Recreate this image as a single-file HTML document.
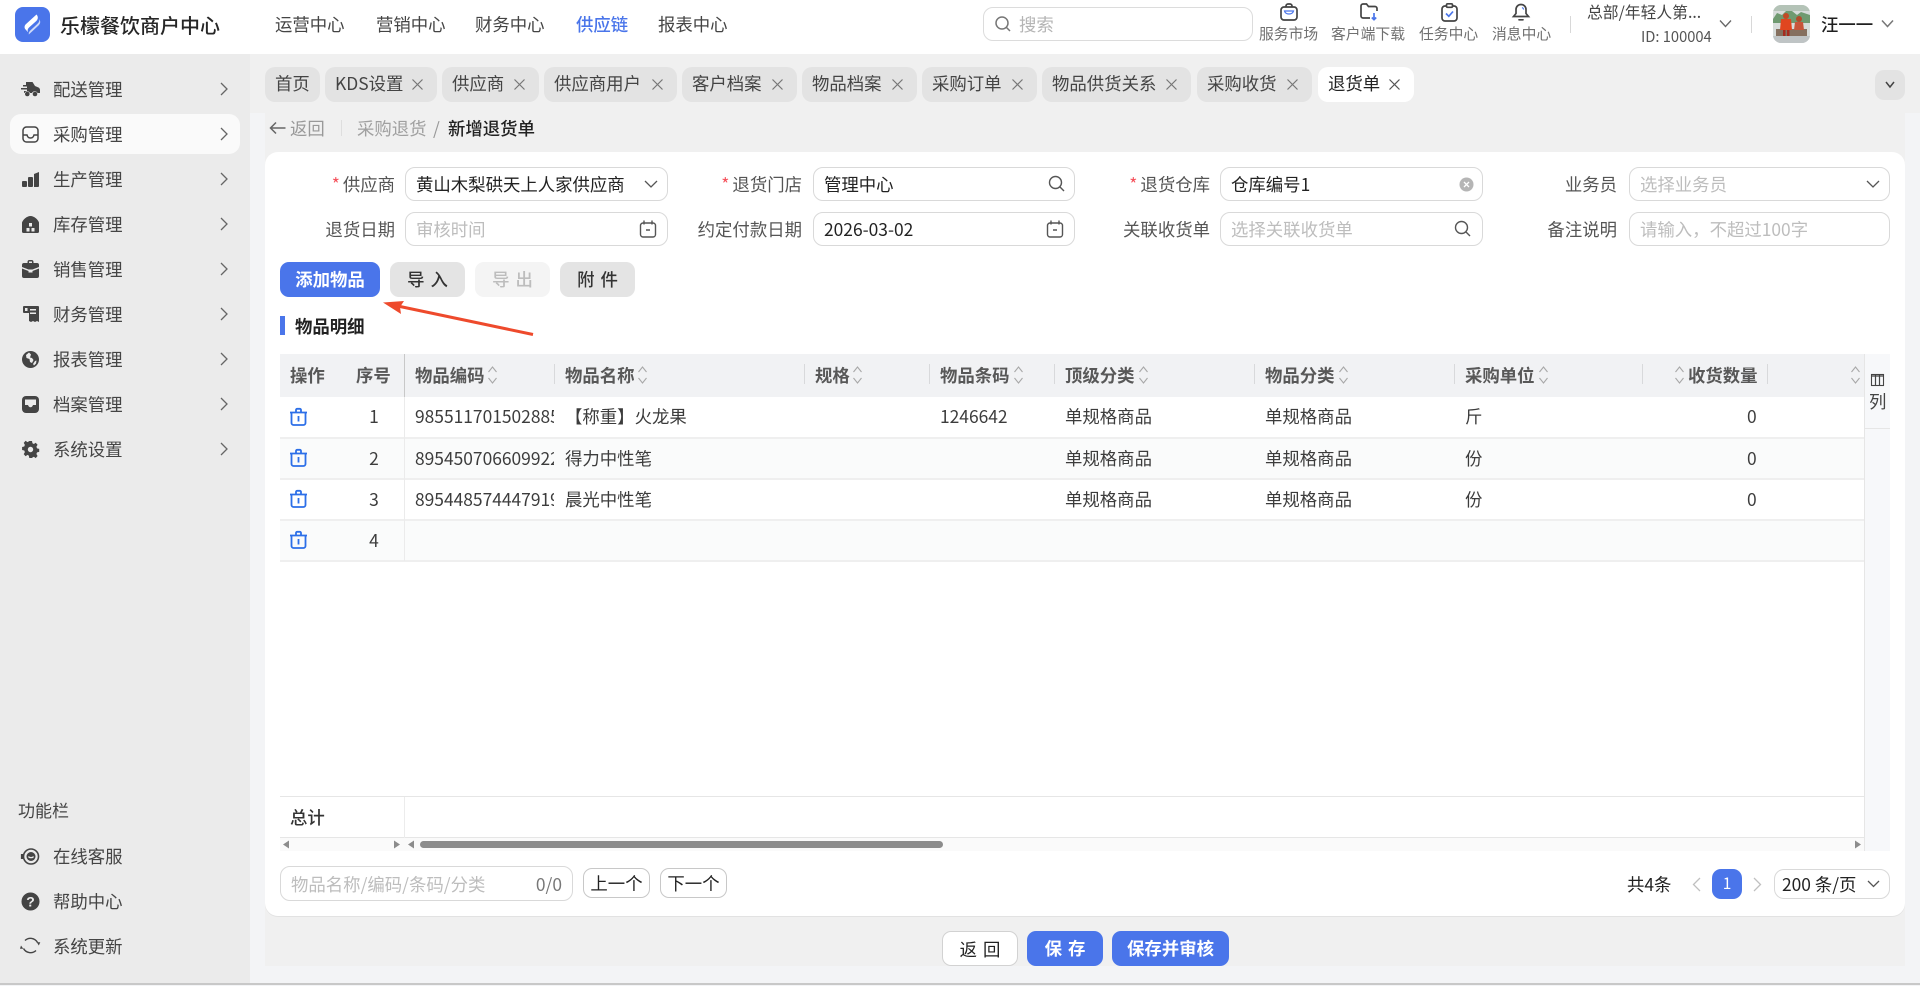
<!DOCTYPE html>
<html lang="zh-CN"><head><meta charset="utf-8"><title>新增退货单</title>
<style>
*{box-sizing:border-box}
html,body{margin:0;padding:0;width:1920px;height:986px;overflow:hidden;background:#f3f4f6;font-family:"Noto Sans CJK SC","Liberation Sans",sans-serif;font-size:17.4px;color:#333}
.a{position:absolute}
.t{position:absolute;white-space:nowrap;line-height:24px;height:24px}
svg{position:absolute;overflow:visible}
.nav{color:#444;top:13px;font-size:17.4px}
.side{color:#444;left:53px}
.chev{left:220px;width:8px;height:14px}
.tab{position:absolute;top:67px;height:35px;background:#e3e3e3;border-radius:10px;line-height:34px;padding-left:10px;color:#444;white-space:nowrap}
.tab svg{top:12px;right:14px;width:11px;height:11px}
.inp{position:absolute;height:34px;background:#fff;border:1px solid #d9d9d9;border-radius:10px;line-height:33px;padding-left:10px;color:#222;white-space:nowrap}
.ph{color:#bdbdbd}
.lab{position:absolute;white-space:nowrap;line-height:24px;color:#555;text-align:right}
.lab i{color:#f5525c;font-style:normal;margin-right:3px}
.btn{position:absolute;top:262px;height:35px;border-radius:9px;line-height:36px;text-align:center;font-weight:500;background:#e4e4e4;color:#333}
.th{position:absolute;top:364px;font-weight:700;color:#585858;white-space:nowrap;line-height:24px;font-size:17.4px}
.sep{position:absolute;top:364px;width:1px;height:20px;background:#d8d9db}
.td{position:absolute;white-space:nowrap;line-height:24px;color:#3c3c3c}
.hl{position:absolute;left:280px;width:1585px;height:2px;background:#efefef}
.hi{position:absolute;top:24px;font-size:14.8px;color:#707070;line-height:20px;white-space:nowrap}
</style></head><body>

<!-- header -->
<div class="a" style="left:0;top:0;width:1920px;height:54px;background:#fff"></div>
<div class="a" style="left:15px;top:7px;width:35px;height:35px;background:#4a75ea;border-radius:8px"></div>
<svg style="left:15px;top:7px" width="35" height="35" viewBox="0 0 35 35"><path d="M21.500 7.500L10.800 17.200c-1.600 1.600-1.600 3.800-.2 5.300l2.700 3c-1.200-2-.6-3.700 1-5.200l7-6.300c2-2 2-4.500.2-6.500z" fill="#fff"/><path d="M24.200 12.300c1.500 1.800 1.300 4.200-.3 5.800L13.800 27.500c-.2-1.500.2-2.700 1.500-4l6.700-6.200c1.800-1.700 2.700-3 2.200-5z" fill="#cfdaf8"/></svg>
<div class="t" style="left:60px;top:13px;font-size:20px;font-weight:500;color:#262626">乐檬餐饮商户中心</div>
<div class="t nav" style="left:275px">运营中心</div>
<div class="t nav" style="left:376px">营销中心</div>
<div class="t nav" style="left:475px">财务中心</div>
<div class="t nav" style="left:576px;color:#4a75ea;font-weight:500">供应链</div>
<div class="t nav" style="left:658px">报表中心</div>

<div class="a" style="left:983px;top:7px;width:270px;height:34px;border:1px solid #dcdcdc;border-radius:10px;background:#fff"></div>
<svg style="left:994px;top:15px" width="18" height="18" viewBox="0 0 18 18" fill="none" stroke="#777" stroke-width="1.500"><circle cx="8" cy="8" r="6"/><path d="M12.500 12.500L16 16"/></svg>
<div class="t" style="left:1019px;top:13px;color:#b5b5b5">搜索</div>

<svg style="left:1280px;top:3px" width="18" height="18" viewBox="0 0 18 18" fill="none" stroke="#444" stroke-width="1.700"><rect x="1" y="4" width="16" height="13" rx="3"/><path d="M6 4V3a2 2 0 0 1 2-2h2a2 2 0 0 1 2 2v1"/><path d="M4.500 8h9c-.5 2-2.300 3-4.500 3S5 10 4.500 8z" stroke="#4a75ea" stroke-width="1.200" fill="none"/></svg>
<div class="hi" style="left:1259px">服务市场</div>
<svg style="left:1360px;top:3px" width="19" height="18" viewBox="0 0 19 18" fill="none" stroke="#444" stroke-width="1.700"><path d="M10 15H3a2 2 0 0 1-2-2V3a2 2 0 0 1 2-2h3.500l2 2.500H15A2 2 0 0 1 17 5.500V8"/><path d="M14 10v6.500M11.800 14.500l2.200 2.200 2.200-2.200" stroke="#4a75ea"/></svg>
<div class="hi" style="left:1331px">客户端下载</div>
<svg style="left:1441px;top:3px" width="17" height="19" viewBox="0 0 17 19" fill="none" stroke="#444" stroke-width="1.700"><rect x="1" y="3" width="15" height="15" rx="3"/><rect x="5.500" y=".8" width="6" height="3.500" rx="1.200" fill="#fff"/><path d="M5 10.500l2.800 2.800 4.200-4.800" stroke="#4a75ea"/></svg>
<div class="hi" style="left:1419px">任务中心</div>
<svg style="left:1512px;top:3px" width="18" height="19" viewBox="0 0 18 19" fill="none" stroke="#444" stroke-width="1.700"><path d="M9 1.500c-3 0-5 2.300-5 5v4L1.500 13.500h15L14 10.500v-4c0-2.700-2-5-5-5z"/><path d="M7 16.800h4" stroke-linecap="round"/><path d="M10 4.500c1 .4 1.500 1.200 1.700 2" stroke="#4a75ea" stroke-width="1.200"/></svg>
<div class="hi" style="left:1492px">消息中心</div>
<div class="a" style="left:1570px;top:16px;width:1px;height:17px;background:#d8d8d8"></div>
<div class="t" style="left:1587px;top:0;font-size:15.8px;color:#444">总部/年轻人第...</div>
<div class="t" style="left:1641px;top:25px;font-size:14.7px;color:#555">ID: 100004</div>
<svg style="left:1719px;top:19px" width="13" height="9" viewBox="0 0 13 9" fill="none" stroke="#666" stroke-width="1.300"><path d="M1 1.500l5.500 6 5.500-6"/></svg>
<div class="a" style="left:1751px;top:16px;width:1px;height:17px;background:#d8d8d8"></div>
<svg style="left:1773px;top:5px" width="37" height="38" viewBox="0 0 37 38"><defs><clipPath id="av"><rect width="37" height="38" rx="8"/></clipPath></defs><g clip-path="url(#av)"><rect width="37" height="38" fill="#d7dcda"/><path d="M0 14l4-6 5 2 4-4h6l5 4 4-3 9 3v8H0z" fill="#6f9a70"/><rect x="0" y="0" width="37" height="6" fill="#b4c3b7"/><rect y="31" width="37" height="7" fill="#bfc4c5"/><rect x="3" y="24" width="31" height="7" fill="#85705f"/><circle cx="13" cy="11" r="3" fill="#c24a26"/><path d="M8 14h10l1 11H7z" fill="#e0461f"/><rect x="10" y="25" width="2.500" height="6" fill="#a52a1e"/><rect x="14" y="25" width="2.500" height="6" fill="#a52a1e"/><circle cx="26" cy="14" r="3" fill="#b24b2c"/><path d="M22 17h8l1 8h-10z" fill="#c8553a"/></g></svg>
<div class="t" style="left:1821px;top:13px;font-weight:500;color:#1f1f1f;font-size:17.4px">汪一一</div>
<svg style="left:1881px;top:19px" width="13" height="9" viewBox="0 0 13 9" fill="none" stroke="#777" stroke-width="1.500"><path d="M1 1.500l5.500 6 5.500-6"/></svg>

<!-- sidebar -->
<div class="a" style="left:0;top:54px;width:250px;height:929px;background:#ebebeb"></div>
<div class="a" style="left:10px;top:114px;width:230px;height:40px;background:#fafafa;border-radius:11px"></div>

<svg style="left:21px;top:82px" width="19" height="15" viewBox="0 0 19 15" fill="#444"><path d="M5 0h6.500l2.500 4 3.500 1.500c.8.500 1.500 1.200 1.500 2.500v3h-2.500a3 3 0 0 0-5.500 0H9a3 3 0 0 0-5.500 0H3V9h3V7.500H0V6h6V4.500H2V3h3z"/><circle cx="6.300" cy="12" r="2.300"/><circle cx="14" cy="12" r="2.300"/></svg>
<div class="t side" style="top:78px">配送管理</div>
<svg class="chev" style="top:82px" viewBox="0 0 8 14" fill="none" stroke="#666" stroke-width="1.300"><path d="M1 1l6 6-6 6"/></svg>

<svg style="left:22px;top:126px" width="17" height="17" viewBox="0 0 17 17" fill="none" stroke="#444" stroke-width="1.500"><rect x="1" y="1" width="15" height="15" rx="3.500"/><path d="M1 9h4c.5 2 1.800 3 3.500 3s3-1 3.500-3h4"/></svg>
<div class="t side" style="top:123px">采购管理</div>
<svg class="chev" style="top:127px" viewBox="0 0 8 14" fill="none" stroke="#666" stroke-width="1.300"><path d="M1 1l6 6-6 6"/></svg>

<svg style="left:22px;top:172px" width="17" height="15" viewBox="0 0 17 15" fill="#444"><rect x="0" y="9" width="5" height="6" rx="1"/><rect x="6" y="5" width="5" height="10" rx="1"/><path d="M12 2l5-2v14a1 1 0 0 1-1 1h-4z"/></svg>
<div class="t side" style="top:168px">生产管理</div>
<svg class="chev" style="top:172px" viewBox="0 0 8 14" fill="none" stroke="#666" stroke-width="1.300"><path d="M1 1l6 6-6 6"/></svg>

<svg style="left:22px;top:216px" width="17" height="17" viewBox="0 0 17 17" fill="#444"><path d="M8.500 0C5 0 1 3.500 0 6.500V15.500A1.500 1.500 0 0 0 1.500 17h14a1.500 1.500 0 0 0 1.500-1.500V6.500C16 3.500 12 0 8.500 0z"/><rect x="7" y="7" width="3" height="3.500" fill="#ebebeb"/><rect x="4.500" y="12" width="3" height="3.500" fill="#ebebeb"/><rect x="9.500" y="12" width="3" height="3.500" fill="#ebebeb"/></svg>
<div class="t side" style="top:213px">库存管理</div>
<svg class="chev" style="top:217px" viewBox="0 0 8 14" fill="none" stroke="#666" stroke-width="1.300"><path d="M1 1l6 6-6 6"/></svg>

<svg style="left:22px;top:260px" width="17" height="18" viewBox="0 0 17 18" fill="#444"><path d="M5.500 3V2a2 2 0 0 1 2-2h2a2 2 0 0 1 2 2v1H15a2 2 0 0 1 2 2v11a2 2 0 0 1-2 2H2a2 2 0 0 1-2-2V5a2 2 0 0 1 2-2z"/><path d="M7 1.500h3V3H7z" fill="#ebebeb"/><path d="M0 7l6.500 2.500h4L17 7v1.500l-6.500 2.500v1.500h-4V11L0 8.500z" fill="#ebebeb"/></svg>
<div class="t side" style="top:258px">销售管理</div>
<svg class="chev" style="top:262px" viewBox="0 0 8 14" fill="none" stroke="#666" stroke-width="1.300"><path d="M1 1l6 6-6 6"/></svg>

<svg style="left:23px;top:306px" width="16" height="16" viewBox="0 0 16 16" fill="#444"><path d="M0 1a1 1 0 0 1 1-1h14a1 1 0 0 1 1 1v15l-2-1-2 1-2-1-2 1-2-1V7H1a1 1 0 0 1-1-1z"/><rect x="7" y="3" width="6" height="1.500" fill="#ebebeb"/><rect x="7" y="6.500" width="6" height="1.500" fill="#ebebeb"/><rect x="2" y="2" width="2.500" height="3" fill="#ebebeb"/></svg>
<div class="t side" style="top:303px">财务管理</div>
<svg class="chev" style="top:307px" viewBox="0 0 8 14" fill="none" stroke="#666" stroke-width="1.300"><path d="M1 1l6 6-6 6"/></svg>

<svg style="left:22px;top:351px" width="17" height="17" viewBox="0 0 17 17"><circle cx="8.500" cy="8.500" r="8.500" fill="#444"/><path d="M7 1.500L4 4l.5 3 3 1 .5 3 2 1 1.500-3-1.500-2-2-.5L9 3.500zM13 10l1.500-.5-.5 3-2 2-1-1.500z" fill="#ebebeb"/></svg>
<div class="t side" style="top:348px">报表管理</div>
<svg class="chev" style="top:352px" viewBox="0 0 8 14" fill="none" stroke="#666" stroke-width="1.300"><path d="M1 1l6 6-6 6"/></svg>

<svg style="left:22px;top:396px" width="17" height="17" viewBox="0 0 17 17"><rect width="17" height="17" rx="4" fill="#444"/><path d="M3 3.500h11V9h-3c-.5 1.500-1.500 2.300-2.500 2.300S6.500 10.500 6 9H3z" fill="#ebebeb"/></svg>
<div class="t side" style="top:393px">档案管理</div>
<svg class="chev" style="top:397px" viewBox="0 0 8 14" fill="none" stroke="#666" stroke-width="1.300"><path d="M1 1l6 6-6 6"/></svg>

<svg style="left:22px;top:441px" width="17" height="17" viewBox="0 0 17 17"><path d="M7 0h3l.5 2.300 1.600.7 2-1.300 2.100 2.100-1.300 2 .7 1.600 2.400.5v3l-2.400.5-.7 1.600 1.300 2-2.100 2.100-2-1.300-1.600.7L10 17H7l-.5-2.400-1.600-.7-2 1.300L.8 13.100l1.300-2-.7-1.600L-1 9V6l2.400-.5.7-1.600-1.300-2L2.900-.2l2 1.300 1.600-.7z" transform="translate(1 0) scale(.9 1)" fill="#444"/><circle cx="8.500" cy="8.500" r="2.700" fill="#ebebeb"/></svg>
<div class="t side" style="top:438px">系统设置</div>
<svg class="chev" style="top:442px" viewBox="0 0 8 14" fill="none" stroke="#666" stroke-width="1.300"><path d="M1 1l6 6-6 6"/></svg>

<div class="t" style="left:18px;top:798px;color:#444;font-size:17px">功能栏</div>
<svg style="left:20px;top:847px" width="21" height="19" viewBox="0 0 21 19" fill="none" stroke="#444"><circle cx="11" cy="9.500" r="7.500" stroke-width="1.600"/><circle cx="11" cy="9.500" r="4.500" fill="#444" stroke="none"/><path d="M8.500 9.500c.5 1.500 4.500 1.500 5 0" stroke="#ebebeb" stroke-width="1.200"/><path d="M2 7v5" stroke-width="2.200"/></svg>
<div class="t side" style="top:845px">在线客服</div>
<svg style="left:21px;top:892px" width="19" height="19" viewBox="0 0 19 19"><circle cx="9.500" cy="9.500" r="9" fill="#444"/><text x="9.500" y="14.500" text-anchor="middle" font-size="14" font-weight="700" fill="#ebebeb" font-family="Liberation Sans">?</text></svg>
<div class="t side" style="top:890px">帮助中心</div>
<svg style="left:20px;top:936px" width="21" height="19" viewBox="0 0 21 19" fill="none" stroke="#444" stroke-width="1.400"><path d="M5 4.500A8 8 0 0 1 17.500 6.500"/><path d="M16 14.500A8 8 0 0 1 3.500 12.500"/><path d="M18.800 9.500l-2-3.200h3.500z" fill="#444" stroke="none"/><path d="M1 9.500l2.300 3.200H0z" fill="#444" stroke="none"/></svg>
<div class="t side" style="top:935px">系统更新</div>

<!-- main bg -->
<div class="a" style="left:250px;top:54px;width:1670px;height:59px;background:#f0f0f0"></div>
<div class="a" style="left:265px;top:113px;width:1640px;height:853px;background:#f0f0f0"></div>
<div class="a" style="left:0;top:983px;width:1920px;height:1.500px;background:#c8c8c8"></div>

<!-- tabs -->
<div class="tab" style="left:265px;width:55px">首页</div>
<div class="tab" style="left:325px;width:112px;padding-left:10px">KDS设置<svg viewBox="0 0 11 11" stroke="#777" stroke-width="1.200"><path d="M.5.500l10 10M10.500.500l-10 10"/></svg></div>
<div class="tab" style="left:442px;width:97px">供应商<svg viewBox="0 0 11 11" stroke="#777" stroke-width="1.200"><path d="M.5.500l10 10M10.500.500l-10 10"/></svg></div>
<div class="tab" style="left:544px;width:133px">供应商用户<svg viewBox="0 0 11 11" stroke="#777" stroke-width="1.200"><path d="M.5.500l10 10M10.500.500l-10 10"/></svg></div>
<div class="tab" style="left:682px;width:115px">客户档案<svg viewBox="0 0 11 11" stroke="#777" stroke-width="1.200"><path d="M.5.500l10 10M10.500.500l-10 10"/></svg></div>
<div class="tab" style="left:802px;width:115px">物品档案<svg viewBox="0 0 11 11" stroke="#777" stroke-width="1.200"><path d="M.5.500l10 10M10.500.500l-10 10"/></svg></div>
<div class="tab" style="left:922px;width:115px">采购订单<svg viewBox="0 0 11 11" stroke="#777" stroke-width="1.200"><path d="M.5.500l10 10M10.500.500l-10 10"/></svg></div>
<div class="tab" style="left:1042px;width:149px">物品供货关系<svg viewBox="0 0 11 11" stroke="#777" stroke-width="1.200"><path d="M.5.500l10 10M10.500.500l-10 10"/></svg></div>
<div class="tab" style="left:1197px;width:115px">采购收货<svg viewBox="0 0 11 11" stroke="#777" stroke-width="1.200"><path d="M.5.500l10 10M10.500.500l-10 10"/></svg></div>
<div class="tab" style="left:1318px;width:96px;background:#fff;color:#222">退货单<svg viewBox="0 0 11 11" stroke="#555" stroke-width="1.200"><path d="M.5.500l10 10M10.500.500l-10 10"/></svg></div>
<div class="a" style="left:1875px;top:70px;width:30px;height:30px;background:#e3e3e3;border-radius:9px"></div>
<svg style="left:1885px;top:81px" width="10" height="8" viewBox="0 0 10 8" fill="none" stroke="#444" stroke-width="1.500"><path d="M1 1l4 5 4-5"/></svg>

<!-- breadcrumb -->
<svg style="left:269px;top:121px" width="17" height="14" viewBox="0 0 17 14" fill="none" stroke="#666" stroke-width="1.500"><path d="M16.500 7H1.500M7 1.500L1.500 7 7 12.500"/></svg>
<div class="t" style="left:290px;top:117px;color:#999">返回</div>
<div class="a" style="left:341px;top:120px;width:1px;height:16px;background:#dedede"></div>
<div class="t" style="left:357px;top:117px;color:#a0a0a0">采购退货</div>
<div class="t" style="left:433px;top:117px;color:#999">/</div>
<div class="t" style="left:448px;top:117px;color:#222;font-weight:500">新增退货单</div>

<!-- card -->
<div class="a" style="left:265px;top:152px;width:1640px;height:764px;background:#fff;border-radius:13px;box-shadow:0 1px 0 #e2e2e2"></div>

<!-- form -->
<div class="lab" style="right:1525px;top:173px"><i>*</i>供应商</div>
<div class="inp" style="left:405px;top:167px;width:263px">黄山木梨硔天上人家供应商<svg style="left:238px;top:12px" width="14" height="9" viewBox="0 0 14 9" fill="none" stroke="#555" stroke-width="1.300"><path d="M1 1l6 6 6-6"/></svg></div>
<div class="lab" style="right:1118px;top:173px"><i>*</i>退货门店</div>
<div class="inp" style="left:813px;top:167px;width:262px">管理中心<svg style="left:234px;top:7px" width="17" height="18" viewBox="0 0 17 18" fill="none" stroke="#555" stroke-width="1.400"><circle cx="7.500" cy="7.500" r="6"/><path d="M12 12l4 4"/></svg></div>
<div class="lab" style="right:710px;top:173px"><i>*</i>退货仓库</div>
<div class="inp" style="left:1220px;top:167px;width:263px">仓库编号1<svg style="left:238px;top:9px" width="15" height="15" viewBox="0 0 15 15"><circle cx="7.500" cy="7.500" r="7" fill="#b5b5b5"/><path d="M5 5l5 5M10 5l-5 5" stroke="#fff" stroke-width="1.300"/></svg></div>
<div class="lab" style="right:303px;top:173px">业务员</div>
<div class="inp ph" style="left:1629px;top:167px;width:261px">选择业务员<svg style="left:236px;top:12px" width="14" height="9" viewBox="0 0 14 9" fill="none" stroke="#555" stroke-width="1.300"><path d="M1 1l6 6 6-6"/></svg></div>

<div class="lab" style="right:1525px;top:218px">退货日期</div>
<div class="inp ph" style="left:405px;top:212px;width:263px">审核时间<svg style="left:233px;top:7px" width="18" height="18" viewBox="0 0 18 18" fill="none" stroke="#555" stroke-width="1.400"><rect x="1.500" y="3" width="15" height="14" rx="2.500"/><path d="M5 .5v4M13 .5v4M7 10h4"/></svg></div>
<div class="lab" style="right:1118px;top:218px">约定付款日期</div>
<div class="inp" style="left:813px;top:212px;width:262px">2026-03-02<svg style="left:232px;top:7px" width="18" height="18" viewBox="0 0 18 18" fill="none" stroke="#555" stroke-width="1.400"><rect x="1.500" y="3" width="15" height="14" rx="2.500"/><path d="M5 .5v4M13 .5v4M7 10h4"/></svg></div>
<div class="lab" style="right:710px;top:218px">关联收货单</div>
<div class="inp ph" style="left:1220px;top:212px;width:263px">选择关联收货单<svg style="left:233px;top:7px" width="17" height="18" viewBox="0 0 17 18" fill="none" stroke="#555" stroke-width="1.400"><circle cx="7.500" cy="7.500" r="6"/><path d="M12 12l4 4"/></svg></div>
<div class="lab" style="right:303px;top:218px">备注说明</div>
<div class="inp ph" style="left:1629px;top:212px;width:261px">请输入，不超过100字</div>

<!-- buttons -->
<div class="btn" style="left:280px;width:100px;background:#4a75ea;color:#fff;font-weight:700">添加物品</div>
<div class="btn" style="left:390px;width:75px;letter-spacing:6px;text-indent:6px">导入</div>
<div class="btn" style="left:475px;width:75px;letter-spacing:6px;text-indent:6px;background:#f4f4f4;color:#bdbdbd">导出</div>
<div class="btn" style="left:560px;width:75px;letter-spacing:6px;text-indent:6px">附件</div>

<!-- red arrow -->
<svg style="left:380px;top:296px" width="160" height="44" viewBox="0 0 160 44"><path d="M153 38.500L20 10.500" stroke="#ee4a2c" stroke-width="3" fill="none"/><path d="M3 6.500l21-1.500-4 6 1 7z" fill="#ee4a2c"/></svg>

<div class="a" style="left:280px;top:316px;width:5px;height:19px;background:#4a75ea"></div>
<div class="t" style="left:295px;top:315px;font-weight:700;color:#222;font-size:17.4px">物品明细</div>

<!-- table -->
<div class="a" style="left:280px;top:354px;width:1585px;height:43px;background:#f1f2f4"></div>
<div class="a" style="left:404px;top:354px;width:1px;height:43px;background:#c8c8c8"></div>
<div class="a" style="left:280px;top:439px;width:1585px;height:40px;background:#fafbfb"></div>
<div class="a" style="left:280px;top:521px;width:1585px;height:40px;background:#fafbfb"></div>
<div class="hl" style="top:437px"></div><div class="hl" style="top:478px"></div><div class="hl" style="top:519px"></div><div class="hl" style="top:560px"></div>
<div class="a" style="left:404px;top:397px;width:1px;height:164px;background:#ebebeb"></div>

<div class="th" style="left:290px">操作</div>
<div class="th" style="left:356px">序号</div>
<div class="th" style="left:415px">物品编码</div><div class="sep" style="left:554px"></div>
<div class="th" style="left:565px">物品名称</div><div class="sep" style="left:804px"></div>
<div class="th" style="left:815px">规格</div><div class="sep" style="left:929px"></div>
<div class="th" style="left:940px">物品条码</div><div class="sep" style="left:1054px"></div>
<div class="th" style="left:1065px">顶级分类</div><div class="sep" style="left:1254px"></div>
<div class="th" style="left:1265px">物品分类</div><div class="sep" style="left:1454px"></div>
<div class="th" style="left:1465px">采购单位</div><div class="sep" style="left:1642px"></div>
<div class="th" style="left:1688px">收货数量</div><div class="sep" style="left:1767px"></div>

<svg style="left:0;top:0;pointer-events:none" width="1920" height="986" fill="none" stroke="#a8a8a8" stroke-width="1.100">
<defs><path id="so" d="M.5 6l4-5 4 5M.5 12l4 5 4-5"/></defs>
<use href="#so" x="488" y="366"/><use href="#so" x="638" y="366"/><use href="#so" x="853" y="366"/><use href="#so" x="1014" y="366"/><use href="#so" x="1139" y="366"/><use href="#so" x="1339" y="366"/><use href="#so" x="1539" y="366"/><use href="#so" x="1675" y="366"/><use href="#so" x="1851" y="366"/>
<defs><g id="tr" stroke="#2c6fe8" stroke-width="1.800"><path d="M1.500 4.500h14v10.500a2 2 0 0 1-2 2H3.500a2 2 0 0 1-2-2zM0 4.500h17M6 4.500V2a1.200 1.200 0 0 1 1.200-1.200h2.600A1.200 1.200 0 0 1 11 2v2.500M8.500 8v5.500"/></g></defs>
<use href="#tr" x="290" y="408"/><use href="#tr" x="290" y="449"/><use href="#tr" x="290" y="490"/><use href="#tr" x="290" y="531"/>
</svg>

<div class="td" style="left:366px;top:405px;width:16px;text-align:center">1</div>
<div class="td" style="left:366px;top:447px;width:16px;text-align:center">2</div>
<div class="td" style="left:366px;top:488px;width:16px;text-align:center">3</div>
<div class="td" style="left:366px;top:529px;width:16px;text-align:center">4</div>
<div class="td" style="left:415px;top:405px;width:139px;overflow:hidden">985511701502885</div>
<div class="td" style="left:415px;top:447px;width:139px;overflow:hidden">895450706609922</div>
<div class="td" style="left:415px;top:488px;width:139px;overflow:hidden">895448574447919</div>
<div class="td" style="left:565px;top:405px">【称重】火龙果</div>
<div class="td" style="left:565px;top:447px">得力中性笔</div>
<div class="td" style="left:565px;top:488px">晨光中性笔</div>
<div class="td" style="left:940px;top:405px">1246642</div>
<div class="td" style="left:1065px;top:405px">单规格商品</div><div class="td" style="left:1065px;top:447px">单规格商品</div><div class="td" style="left:1065px;top:488px">单规格商品</div>
<div class="td" style="left:1265px;top:405px">单规格商品</div><div class="td" style="left:1265px;top:447px">单规格商品</div><div class="td" style="left:1265px;top:488px">单规格商品</div>
<div class="td" style="left:1465px;top:405px">斤</div><div class="td" style="left:1465px;top:447px">份</div><div class="td" style="left:1465px;top:488px">份</div>
<div class="td" style="left:1747px;top:405px">0</div><div class="td" style="left:1747px;top:447px">0</div><div class="td" style="left:1747px;top:488px">0</div>

<!-- column settings -->
<div class="a" style="left:1864px;top:354px;width:26px;height:497px;background:#f7f8fa;border-left:1px solid #e6e6e6"></div>
<div class="a" style="left:1865px;top:428px;width:25px;height:1px;background:#e6e6e6"></div>
<svg style="left:1871px;top:374px" width="13" height="12" viewBox="0 0 13 12" fill="none" stroke="#444" stroke-width="1.100"><rect x=".5" y=".5" width="12" height="11"/><path d="M4.500.5v11M8.500.5v11M.5 2h12" stroke-width="1.200"/></svg>
<div class="t" style="left:1869px;top:390px;color:#444">列</div>

<!-- total -->
<div class="hl" style="top:796px;height:1px;background:#e6e6e6;width:1584px"></div>
<div class="hl" style="top:837px;height:1px;background:#e6e6e6;width:1584px"></div>
<div class="a" style="left:404px;top:797px;width:1px;height:54px;background:#ececec"></div>
<div class="t" style="left:290px;top:806px;font-weight:500;color:#333">总计</div>
<div class="a" style="left:280px;top:838px;width:1584px;height:13px;background:#fafafa"></div>
<div class="a" style="left:420px;top:841px;width:523px;height:7px;background:#8c8c8c;border-radius:4px"></div>
<svg style="left:0;top:0" width="1920" height="986" fill="#8c8c8c"><path d="M283 844.500l6-4v8zM400 844.500l-6-4v8zM408 844.500l6-4v8zM1861 844.500l-6-4v8z"/></svg>

<!-- pagination -->
<div class="inp ph" style="left:280px;top:866px;width:293px;height:35px;line-height:35px">物品名称/编码/条码/分类<span style="position:absolute;right:10px;color:#777">0/0</span></div>
<div class="a" style="left:583px;top:868px;width:67px;height:30px;border:1px solid #c8c8c8;border-radius:9px;text-align:center;line-height:29px;color:#222">上一个</div>
<div class="a" style="left:660px;top:868px;width:67px;height:30px;border:1px solid #c8c8c8;border-radius:9px;text-align:center;line-height:29px;color:#222">下一个</div>
<div class="t" style="left:1627px;top:873px;color:#222">共4条</div>
<svg style="left:1692px;top:877px" width="9" height="15" viewBox="0 0 9 15" fill="none" stroke="#c0c0c0" stroke-width="1.300"><path d="M8 1L1.500 7.500 8 14"/></svg>
<div class="a" style="left:1712px;top:869px;width:30px;height:30px;background:#4a75ea;border-radius:9px;color:#fff;text-align:center;line-height:29px;font-size:15.500px">1</div>
<svg style="left:1753px;top:877px" width="9" height="15" viewBox="0 0 9 15" fill="none" stroke="#c0c0c0" stroke-width="1.300"><path d="M1 1l6.500 6.500L1 14"/></svg>
<div class="inp" style="left:1774px;top:869px;width:116px;height:30px;padding-left:7px;line-height:29px">200 条/页<svg style="left:92px;top:10px" width="13" height="8" viewBox="0 0 13 8" fill="none" stroke="#555" stroke-width="1.300"><path d="M1 1l5.500 5.500L12 1"/></svg></div>

<!-- footer buttons -->
<div class="a" style="left:942px;top:931px;width:76px;height:35px;background:#fff;border:1px solid #d2d2d2;border-radius:9px;text-align:center;line-height:35px;letter-spacing:6px;text-indent:6px;color:#222">返回</div>
<div class="a" style="left:1027px;top:931px;width:76px;height:35px;background:#4a75ea;border-radius:9px;text-align:center;line-height:36px;letter-spacing:6px;text-indent:6px;color:#fff;font-weight:700">保存</div>
<div class="a" style="left:1112px;top:931px;width:117px;height:35px;background:#4a75ea;border-radius:9px;text-align:center;line-height:36px;color:#fff;font-weight:700">保存并审核</div>
</body></html>
